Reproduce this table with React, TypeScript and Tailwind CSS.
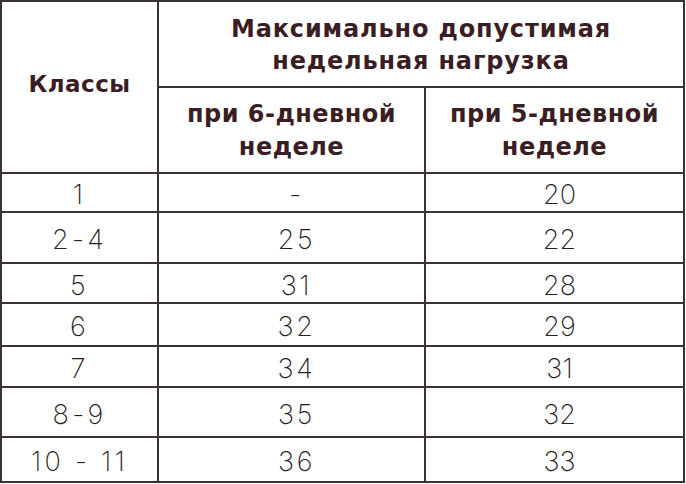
const ROWS = [
  { cls: "1", six: "-", five: "20", h: "h-[37px]" },
  { cls: "2-4", six: "25", five: "22", h: "h-[49px]" },
  { cls: "5", six: "31", five: "28", h: "h-[38px]" },
  { cls: "6", six: "32", five: "29", h: "h-[41px]" },
  { cls: "7", six: "34", five: "31", h: "h-[39px]" },
  { cls: "8-9", six: "35", five: "32", h: "h-[48px]" },
  { cls: "10 - 11", six: "36", five: "33", h: "h-[43px]" },
];

const head = "font-['DejaVu_Sans',sans-serif] text-[#3b1e24]";
const num = "font-['Inter',sans-serif] font-[250] text-[27px] text-[#262022] leading-none";

export default function App() {
  return (
    <div className="w-[686px] h-[484px] bg-white">
      <div className="w-[685px] bg-[#3a3133] p-[2px] grid grid-cols-[155px_265px_257px] gap-[2px]">
        {/* Header */}
        <div className={`row-span-2 bg-white flex items-center justify-center pb-[6px] ${head} font-bold text-[23px] tracking-[0.02em]`}>
          Классы
        </div>
        <div className={`col-span-2 h-[84px] bg-white flex flex-col items-center justify-center pt-[2px] ${head} font-bold text-[24px] tracking-[0.035em] leading-[32px]`}>
          <span>Максимально допустимая</span>
          <span>недельная нагрузка</span>
        </div>
        <div className={`h-[84px] bg-white flex flex-col items-center justify-center pt-[2px] ${head} font-semibold text-[24px] tracking-[0.02em] leading-[33px]`}>
          <span>при 6-дневной</span>
          <span>неделе</span>
        </div>
        <div className={`h-[84px] bg-white flex flex-col items-center justify-center pt-[2px] ${head} font-semibold text-[24px] tracking-[0.02em] leading-[33px]`}>
          <span>при 5-дневной</span>
          <span>неделе</span>
        </div>

        {/* Body */}
        {ROWS.map((r) => (
          <div key={r.cls} className="contents">
            <div className={`${r.h} bg-white flex items-center justify-center pt-[4px] ${num} tracking-[0.12em]`}>
              {r.cls}
            </div>
            <div className={`${r.h} bg-white flex items-center justify-center pt-[4px] pl-[10px] ${num} tracking-[0.1em]`}>
              {r.six}
            </div>
            <div className={`${r.h} bg-white flex items-center justify-center pt-[4px] pl-[10px] ${num}`}>
              {r.five}
            </div>
          </div>
        ))}
      </div>
    </div>
  );
}
